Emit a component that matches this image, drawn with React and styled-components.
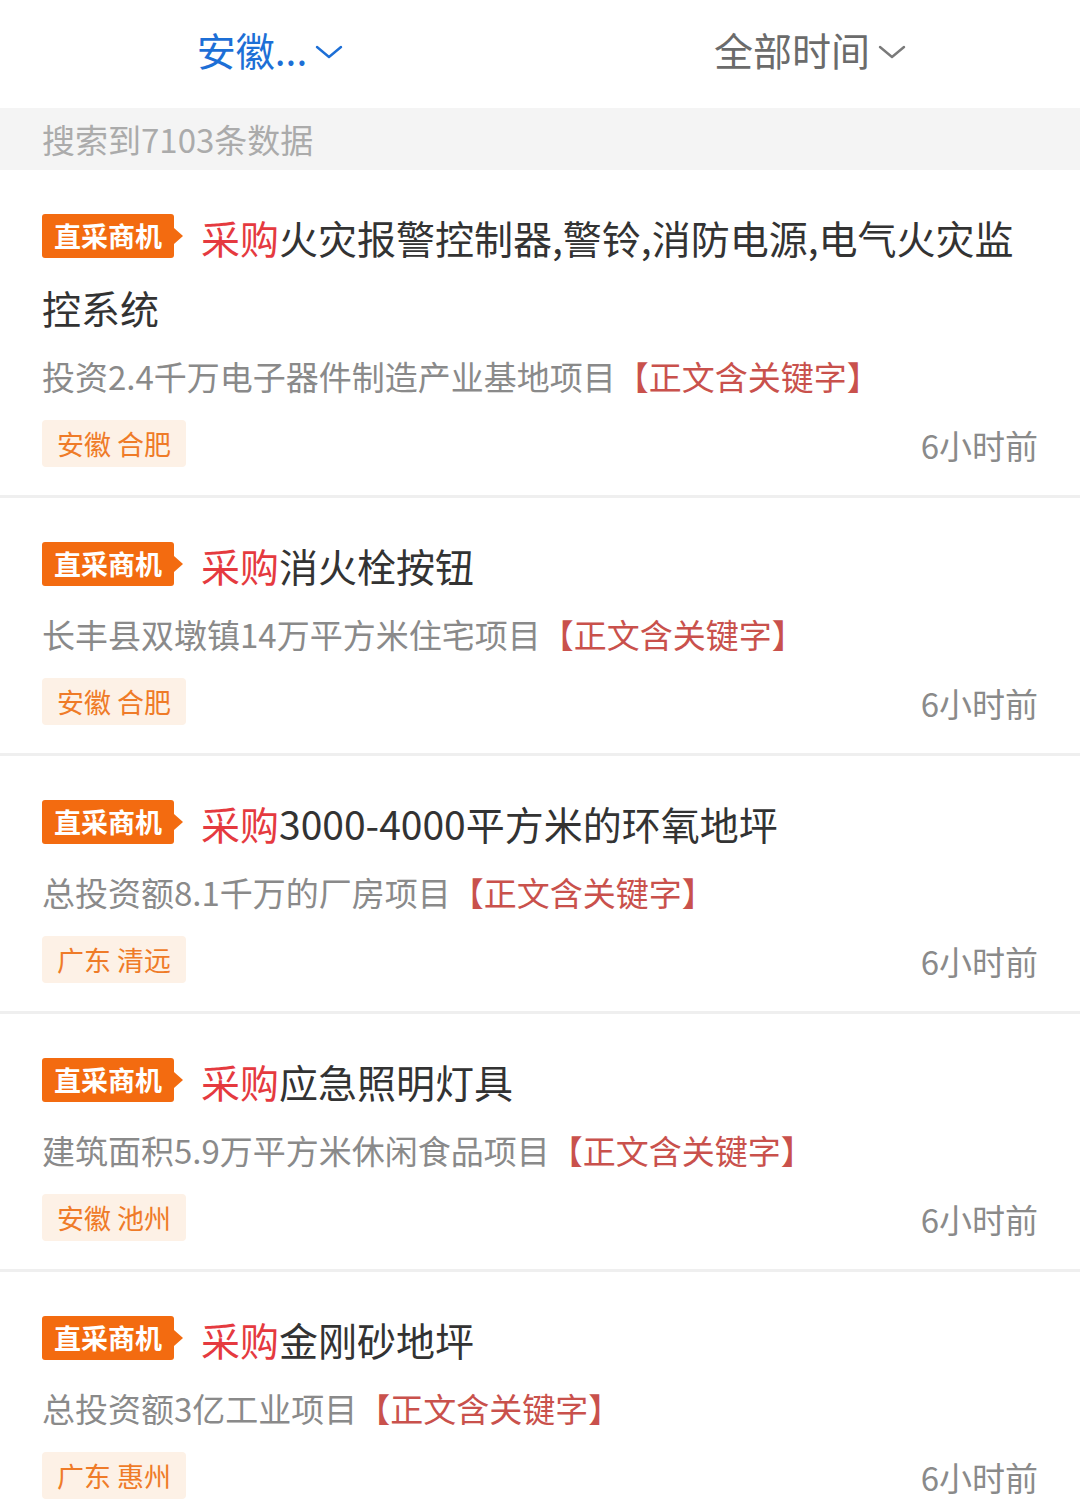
import React from "react";
import styled, { createGlobalStyle } from "styled-components";

const GlobalStyle = createGlobalStyle`
  html, body {
    margin: 0;
    padding: 0;
    background: #ffffff;
    font-family: "Noto Sans CJK SC", "Noto Sans", sans-serif;
  }
`;

const Page = styled.div`
  width: 1080px;
  background: #fff;
`;

const FilterBar = styled.div`
  display: flex;
  height: 108px;
  background: #fff;
`;

const FilterTab = styled.div`
  flex: 1;
  display: flex;
  align-items: center;
  justify-content: center;
  gap: 8px;
  padding-bottom: 10px;
  font-size: 39px;
  color: ${({ active }) => (active ? "#1d6fd6" : "#6b6b6b")};
`;

const Chevron = styled.svg`
  width: 28px;
  height: 16px;
  margin-top: 6px;
`;

const CountBar = styled.div`
  height: 62px;
  display: flex;
  align-items: center;
  padding-left: 42px;
  background: #f4f4f4;
  font-size: 33px;
  color: #ababab;
`;

const Card = styled.div`
  padding: 32px 42px 28px;
  border-bottom: 3px solid #efefef;
`;

const Title = styled.div`
  font-size: 39px;
  line-height: 70px;
  color: #333;
`;

const Badge = styled.span`
  position: relative;
  display: inline-flex;
  align-items: center;
  height: 44px;
  padding: 0 12px;
  margin-right: 27px;
  vertical-align: 7px;
  background: #f36b10;
  border-radius: 3px;
  color: #fff;
  font-size: 27px;
  font-weight: 700;
  line-height: 1;

  &::after {
    content: "";
    position: absolute;
    right: -9px;
    top: 50%;
    margin-top: -8px;
    border-top: 8px solid transparent;
    border-bottom: 8px solid transparent;
    border-left: 9px solid #f36b10;
  }
`;

const Buy = styled.span`
  color: #e53a3f;
`;

const Summary = styled.div`
  font-size: 33px;
  line-height: 68px;
  color: #8a8a8a;
`;

const Keyword = styled.span`
  color: #c9514c;
`;

const MetaRow = styled.div`
  display: flex;
  align-items: center;
  justify-content: space-between;
  height: 47px;
  margin-top: 10px;
`;

const AreaTag = styled.span`
  display: inline-flex;
  align-items: center;
  height: 47px;
  padding: 0 15px;
  background: #fdf1e6;
  border-radius: 4px;
  font-size: 27px;
  color: #ef7b28;
`;

const Time = styled.span`
  font-size: 33px;
  line-height: 1;
  padding-top: 4px;
  color: #8a8a8a;
`;

const items = [
  {
    title: "火灾报警控制器,警铃,消防电源,电气火灾监控系统",
    summary: "投资2.4千万电子器件制造产业基地项目",
    area: "安徽 合肥",
  },
  {
    title: "消火栓按钮",
    summary: "长丰县双墩镇14万平方米住宅项目",
    area: "安徽 合肥",
  },
  {
    title: "3000-4000平方米的环氧地坪",
    summary: "总投资额8.1千万的厂房项目",
    area: "广东 清远",
  },
  {
    title: "应急照明灯具",
    summary: "建筑面积5.9万平方米休闲食品项目",
    area: "安徽 池州",
  },
  {
    title: "金刚砂地坪",
    summary: "总投资额3亿工业项目",
    area: "广东 惠州",
  },
];

const Arrow = ({ color }) => (
  <Chevron viewBox="0 0 28 16">
    <path d="M2 3 L14 13 L26 3" fill="none" stroke={color} strokeWidth="2.4" strokeLinecap="round" strokeLinejoin="round" />
  </Chevron>
);

export default function App() {
  return (
    <Page>
      <GlobalStyle />
      <FilterBar>
        <FilterTab active>
          安徽...
          <Arrow color="#1d6fd6" />
        </FilterTab>
        <FilterTab>
          全部时间
          <Arrow color="#7a7a7a" />
        </FilterTab>
      </FilterBar>
      <CountBar>搜索到7103条数据</CountBar>
      {items.map((item, i) => (
        <Card key={i}>
          <Title>
            <Badge>直采商机</Badge>
            <Buy>采购</Buy>
            {item.title}
          </Title>
          <Summary>
            {item.summary}
            <Keyword>【正文含关键字】</Keyword>
          </Summary>
          <MetaRow>
            <AreaTag>{item.area}</AreaTag>
            <Time>6小时前</Time>
          </MetaRow>
        </Card>
      ))}
    </Page>
  );
}
